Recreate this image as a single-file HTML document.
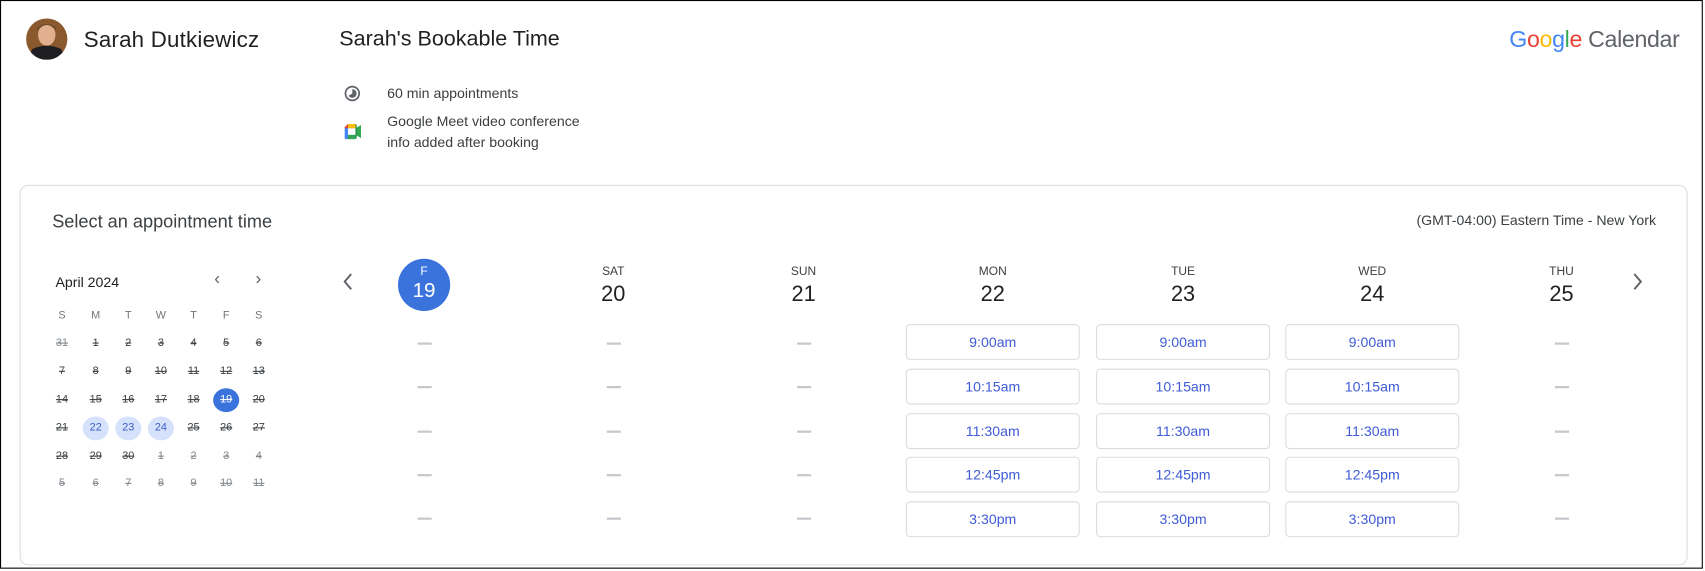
<!DOCTYPE html>
<html><head><meta charset="utf-8"><style>
html,body{margin:0;padding:0;background:#fff;overflow:hidden}
body{width:1705px;height:571px}
#w{position:absolute;left:0;top:0;width:1568px;height:525px;transform:scale(1.08737);transform-origin:0 0;font-family:"Liberation Sans",Arial,sans-serif;color:#3c4043}
.a{position:absolute;white-space:nowrap}
.frame{position:absolute;left:0;top:0;width:1564px;height:521px;border:1.8px solid #000}
.card{position:absolute;left:18px;top:170px;width:1532px;height:348px;border:1px solid #dadce0;border-radius:8px}
.mc{position:absolute;font-size:10px;width:24px;text-align:center;line-height:22px;height:22px;margin-left:-12px;margin-top:-11px;color:#3c4043;text-decoration:line-through}
.mc.h{color:#70757a;text-decoration:none}
.mc.g{color:#80868b}
.mc.l{background:#d6e2fb;border-radius:50%;color:#3b5bc4;text-decoration:none}
.mc.s{background:#3b73dd;border-radius:50%;color:#fff}
.dl{position:absolute;font-size:11px;color:#3c4043;width:60px;text-align:center;margin-left:-30px}
.dn{position:absolute;font-size:20px;color:#202124;width:60px;text-align:center;margin-left:-30px}
.dash{position:absolute;width:13px;height:1.5px;background:#c4c7cc;margin-left:-6px}
.btn{position:absolute;width:158px;height:31px;border:1px solid #dadce0;border-radius:4px;text-align:center;line-height:31px;font-size:13px;color:#3f5bd6}
</style></head><body><div id="w">
<div class="frame"></div>
<svg class="a" style="left:24px;top:17px" width="38" height="38"><defs><clipPath id="c"><circle cx="19" cy="19" r="19"/></clipPath></defs><g clip-path="url(#c)"><rect width="38" height="38" fill="#8a5a2e"/><ellipse cx="19" cy="15" rx="8" ry="10" fill="#e2b08e"/><path d="M0 38 L6 28 Q19 22 32 28 L38 38Z" fill="#1e1e22"/><path d="M10 12 Q19 0 28 12 L27 8 Q19 2 11 8Z" fill="#6b4a2a"/></g></svg>
<div class="a" style="left:77px;top:25px;font-size:20.5px;color:#202124;letter-spacing:0.2px">Sarah Dutkiewicz</div>
<div class="a" style="left:312px;top:25px;font-size:19.8px;color:#202124">Sarah's Bookable Time</div>
<svg class="a" style="left:316px;top:78px" width="16" height="16"><circle cx="8" cy="8" r="6.3" fill="none" stroke="#5f6368" stroke-width="1.6"/><path d="M8 4 A4 4 0 1 1 4.5 10 L8 8Z" fill="#5f6368"/></svg>
<div class="a" style="left:356px;top:78px;font-size:13px">60 min appointments</div>
<svg class="a" style="left:315px;top:113px" width="18" height="16"><path d="M2 4 L5 1 L12 1 L12 5 L5 5 L5 11 L12 11 L12 15 L3 15 Q2 15 2 14Z" fill="#4285f4"/><path d="M5 1 L12 1 L12 5 L5 5Z" fill="#fbbc04"/><path d="M2 4 L5 1 L5 5 L2 5Z" fill="#ea4335"/><path d="M5 11 L12 11 L12 15 L5 15Z" fill="#34a853"/><path d="M12 5 L12 11 L17 14 L17 2Z" fill="#34a853"/><path d="M12 1 L12 15 L13 14 L13 2Z" fill="#188038"/></svg>
<div class="a" style="left:356px;top:102px;font-size:13px;line-height:19px">Google Meet video conference<br>info added after booking</div>
<div class="a" style="left:1388px;top:24px;font-size:21.3px;letter-spacing:-0.3px"><span style="color:#4285f4">G</span><span style="color:#ea4335">o</span><span style="color:#fbbc04">o</span><span style="color:#4285f4">g</span><span style="color:#34a853">l</span><span style="color:#ea4335">e</span> <span style="color:#5f6368">Calendar</span></div>
<div class="card"></div>
<div class="a" style="left:48px;top:194px;font-size:16.7px">Select an appointment time</div>
<div class="a" style="right:45px;top:195px;font-size:13px">(GMT-04:00) Eastern Time - New York</div>
<div class="a" style="left:51px;top:252px;font-size:13px;color:#202124">April 2024</div>
<div class="a" style="left:197px;top:248px;font-size:16px;color:#5f6368">&#8249;</div>
<div class="a" style="left:235px;top:248px;font-size:16px;color:#5f6368">&#8250;</div>
<div id="mini"></div>
<svg class="a" style="left:313px;top:250px" width="14" height="18"><path d="M10 2 L4 9 L10 16" fill="none" stroke="#5f6368" stroke-width="1.8"/></svg>
<svg class="a" style="left:1499px;top:250px" width="14" height="18"><path d="M4 2 L10 9 L4 16" fill="none" stroke="#5f6368" stroke-width="1.8"/></svg>
<div class="a" style="left:366px;top:238px;width:48px;height:48px;border-radius:50%;background:#3b73dd"></div>
<div id="wk"></div>
</div>
<script>
var m=document.getElementById('mini'),h='';
var xs=[57,88,118,148,178,208,238],ys=[291,316,342,368,394,420,445];
'SMTWTFS'.split('').forEach(function(c,i){h+='<div class="mc h" style="left:'+xs[i]+'px;top:'+ys[0]+'px">'+c+'</div>';});
var d=[[31,1,2,3,4,5,6],[7,8,9,10,11,12,13],[14,15,16,17,18,19,20],[21,22,23,24,25,26,27],[28,29,30,1,2,3,4],[5,6,7,8,9,10,11]];
d.forEach(function(r,ri){r.forEach(function(n,ci){var c='mc';
if(ri==0&&ci==0||ri>=4&&!(ri==4&&ci<3))c+=' g';
if(ri==2&&ci==5)c+=' s';if(ri==3&&ci>=1&&ci<=3)c+=' l';
h+='<div class="'+c+'" style="left:'+xs[ci]+'px;top:'+ys[ri+1]+'px">'+n+'</div>';});});
m.innerHTML=h;
var w=document.getElementById('wk');h='';
var cx=[390,564,739,913,1088,1262,1436],lb=['F','SAT','SUN','MON','TUE','WED','THU'],nm=[19,20,21,22,23,24,25];
var ty=[298,339,380,420,461],dy=[315,355,396,436,476],tm=['9:00am','10:15am','11:30am','12:45pm','3:30pm'];
cx.forEach(function(x,i){
 if(i==0){h+='<div class="dl" style="left:'+x+'px;top:244px;color:#fff">F</div><div class="dn" style="left:'+x+'px;top:257px;color:#fff;font-size:19px">19</div>';}
 else{h+='<div class="dl" style="left:'+x+'px;top:244px">'+lb[i]+'</div><div class="dn" style="left:'+x+'px;top:260px">'+nm[i]+'</div>';}
 for(var k=0;k<5;k++){ if(i>=3&&i<=5)h+='<div class="btn" style="left:'+(x-80)+'px;top:'+ty[k]+'px">'+tm[k]+'</div>';
 else h+='<div class="dash" style="left:'+x+'px;top:'+dy[k]+'px"></div>';}
});
w.innerHTML=h;
</script>
</body></html>
